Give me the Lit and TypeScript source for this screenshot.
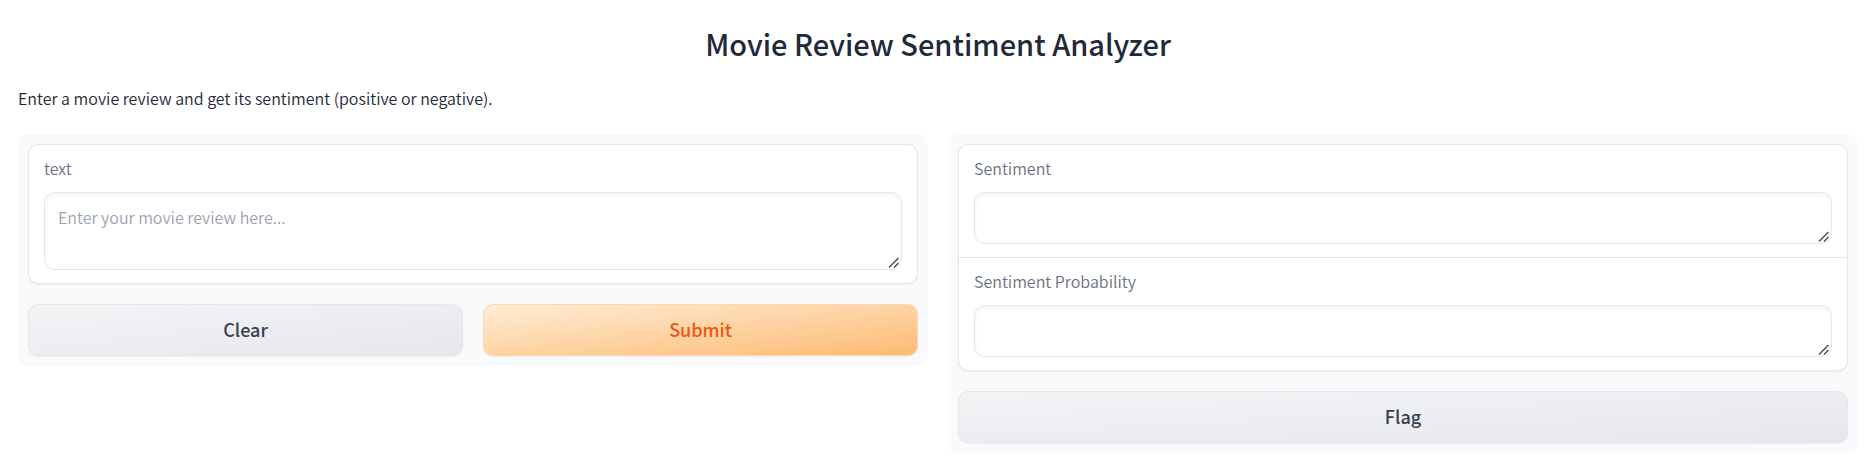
import { LitElement, html, css } from "lit";
import { customElement, state } from "lit/decorators.js";

@customElement("app-root")
export class AppRoot extends LitElement {
  @state() private review = "";
  @state() private sentiment = "";
  @state() private probability = "";

  static styles = css`
    :host {
      display: block;
      box-sizing: border-box;
      padding: 22px 17px 18px 18px;
      background: #fff;
      color: #1f2937;
      font-family: "Source Sans Pro", "Noto Sans CJK SC", "Noto Sans", sans-serif;
      font-size: 16px;
      font-weight: 350;
      line-height: 26px;
    }
    *,
    *::before,
    *::after {
      box-sizing: border-box;
    }
    .title {
      margin: 0 0 21px;
      text-align: center;
      font-size: 29px;
      line-height: 42px;
      font-weight: 500;
    }
    .description {
      margin: 0 0 23px;
    }
    .columns {
      display: grid;
      grid-template-columns: repeat(auto-fit, minmax(min(320px, 100%), 1fr));
      align-items: start;
      gap: 20px;
    }
    .panel {
      display: flex;
      flex-direction: column;
      gap: 20px;
      padding: 10px;
      border-radius: 10px;
      background: #f9fafb;
    }
    .form {
      display: flex;
      flex-direction: column;
      gap: 1px;
      overflow: hidden;
      border: 1px solid #e5e7eb;
      border-radius: 10px;
      background: #e5e7eb;
      box-shadow: 0 1px 2px rgba(0, 0, 0, 0.05);
    }
    .field {
      display: flex;
      flex-direction: column;
      gap: 11px;
      padding: 10px 15px 13px;
      background: #fff;
    }
    .label {
      color: #6b7280;
    }
    .box {
      display: block;
      width: 100%;
      margin: 0;
      padding: 11px 13px 13px;
      border: 1px solid #e5e7eb;
      border-radius: 10px;
      outline: none;
      background: #fff;
      box-shadow: inset 0 2px 4px rgba(0, 0, 0, 0.05);
      color: inherit;
      font: inherit;
      overflow-y: hidden;
      resize: vertical;
    }
    .box::-webkit-resizer {
      background: url("data:image/svg+xml,%3Csvg xmlns='http://www.w3.org/2000/svg' width='15' height='15'%3E%3Cpath d='M3 13.5L12.5 4M8 13.5L12.5 9' fill='none' stroke='%23505050' stroke-width='1.5'/%3E%3C/svg%3E")
        right bottom no-repeat;
    }
    .box:focus {
      border-color: #fed7aa;
    }
    .box::placeholder {
      color: #9ca3af;
      opacity: 1;
    }
    .actions {
      display: flex;
      gap: 20px;
    }
    .button {
      flex: 1 1 0;
      padding: 11px 24px 13px;
      border: 1px solid #e5e7eb;
      border-radius: 10px;
      background: linear-gradient(to bottom right, #f3f4f6, #e5e7eb);
      box-shadow: 0 1px 2px rgba(0, 0, 0, 0.05);
      color: #374151;
      font-family: inherit;
      font-size: 18px;
      font-weight: 500;
      line-height: 26px;
      cursor: pointer;
    }
    .primary {
      border-color: #fed7aa;
      background: linear-gradient(to bottom right, #ffedd5, #fdba74);
      color: #ea580c;
    }
  `;

  private onInput(event: Event) {
    this.review = (event.target as HTMLTextAreaElement).value;
  }

  private clear() {
    this.review = "";
    this.sentiment = "";
    this.probability = "";
  }

  render() {
    return html`
      <main>
        <h1 class="title">Movie Review Sentiment Analyzer</h1>
        <p class="description">Enter a movie review and get its sentiment (positive or negative).</p>
        <div class="columns">
          <section class="panel">
            <div class="form">
              <div class="field">
                <label class="label" for="review">text</label>
                <textarea
                  class="box"
                  id="review"
                  rows="2"
                  placeholder="Enter your movie review here..."
                  .value=${this.review}
                  @input=${this.onInput}
                ></textarea>
              </div>
            </div>
            <div class="actions">
              <button class="button" type="button" @click=${this.clear}>Clear</button>
              <button class="button primary" type="button">Submit</button>
            </div>
          </section>
          <section class="panel">
            <div class="form">
              <div class="field">
                <label class="label" for="sentiment">Sentiment</label>
                <textarea class="box" id="sentiment" rows="1" readonly .value=${this.sentiment}></textarea>
              </div>
              <div class="field">
                <label class="label" for="probability">Sentiment Probability</label>
                <textarea class="box" id="probability" rows="1" readonly .value=${this.probability}></textarea>
              </div>
            </div>
            <div class="actions">
              <button class="button" type="button">Flag</button>
            </div>
          </section>
        </div>
      </main>
    `;
  }
}
